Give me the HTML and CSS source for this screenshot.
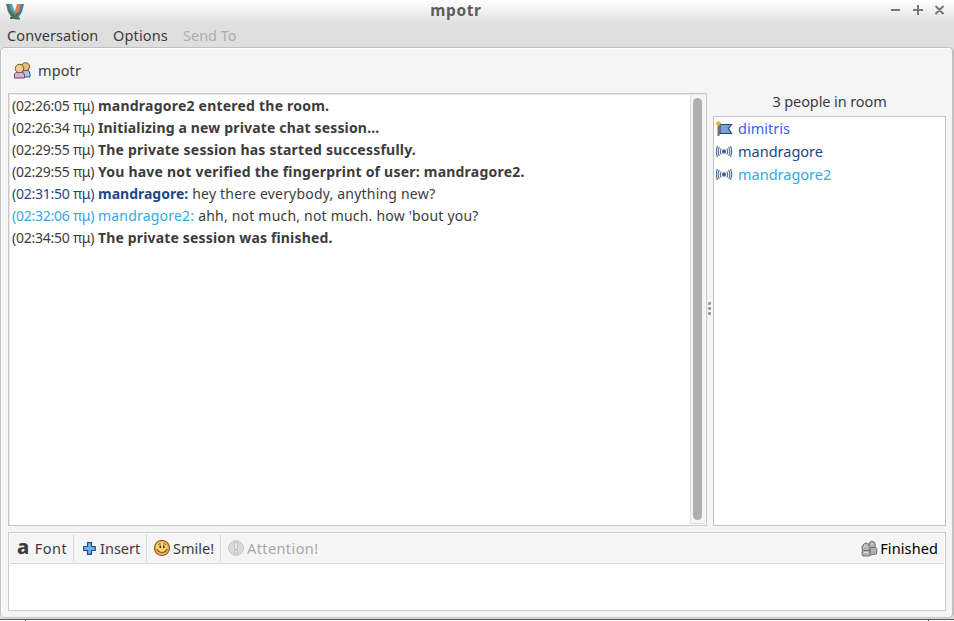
FILE: index.html
```
<!DOCTYPE html>
<html lang="en">
<head>
<meta charset="utf-8">
<title>mpotr</title>
<link rel="stylesheet" href="styles.css">
</head>
<body>
<div class="window">
  <header class="titlebar">
    <svg class="logo" width="20" height="18" viewBox="0 0 20 18"><path d="M1 1H6L8 7L10 12L9 15H7L3 9Z" fill="#4c8066"/><path d="M4 1H7L10 9V12L6 7Z" fill="#55a3b5"/><path d="M19 1H14L11 7L9 12L11 15H13L17 9Z" fill="#487f98"/><path d="M16 1H12L10 8L11 12L14 8Z" fill="#df8053"/><path d="M5 15H9L13 10M6 11L11 15.500H15" fill="none" stroke="#526b4c" stroke-width="1.8"/></svg>
    <h1 class="title">mpotr</h1>
    <svg class="controls" width="56" height="12" viewBox="0 0 56 12" fill="none" stroke="#777" stroke-width="2"><path d="M1 6h9M23 6h10M28 1v10M45.500 2l8 8M53.500 2l-8 8"/></svg>
  </header>
  <nav class="menu"><span class="m1">Conversation</span><span class="m2">Options</span><span class="m3">Send To</span></nav>
  <main class="frame">
    <div class="tab">
      <svg width="17" height="17" viewBox="0 0 17 17"><path d="M8 15V11Q9 8 12 8Q16 8 16 12V15Z" fill="#a9c6ef" stroke="#34579a"/><circle cx="11.5" cy="4.8" r="4" fill="#e5bd7c" stroke="#795325"/><path d="M.5 16V12Q1.500 10 4 10H7Q10 10 10.500 13V16Z" fill="#d9b0d6" stroke="#714477"/><circle cx="5.5" cy="6.5" r="4.2" fill="#f0cc91" stroke="#795325"/></svg>
      <span>mpotr</span>
    </div>
    <div class="panes">
      <section class="chat">
        <div class="log">
          <p><time>(02:26:05 πμ)</time><b class="wide">mandragore2 entered the room.</b></p>
          <p><time>(02:26:34 πμ)</time><b class="mid">Initializing a new private chat session...</b></p>
          <p><time>(02:29:55 πμ)</time><b class="wide">The private session has started successfully.</b></p>
          <p><time>(02:29:55 πμ)</time><b class="wide">You have not verified the fingerprint of user: mandragore2.</b></p>
          <p><time class="navy">(02:31:50 πμ)</time><b class="nick navy">mandragore:</b><span class="said">hey there everybody, anything new?</span></p>
          <p><time class="sky">(02:32:06 πμ)</time><span class="nick said sky">mandragore2:</span><span class="said">ahh, not much, not much. how 'bout you?</span></p>
          <p><time>(02:34:50 πμ)</time><b class="mid">The private session was finished.</b></p>
        </div>
        <div class="scroll"><div class="thumb"></div></div>
      </section>
      <div class="grip"><i></i><i></i><i></i></div>
      <aside class="people">
        <div class="count">3 people in room</div>
        <ul>
          <li><svg width="18" height="16" viewBox="0 0 18 16"><path d="M2.500 3v12" stroke="#65717d" stroke-width="2"/><path d="M4 3.500H15.500L12.500 7.500L15.500 12.500H4Z" fill="#7da3d2" stroke="#29486f" stroke-width="1.200"/><path d="M2.500 0v5M0 2.500h5" stroke="#dcb51f" stroke-width="1.8"/></svg><span class="blue">dimitris</span></li>
          <li><svg width="18" height="16" viewBox="0 0 18 16" fill="none" stroke="#5873a0" stroke-width="1.2"><circle cx="8" cy="7.500" r="1.6" fill="#28466f"/><path d="M5.200 4.500Q3.500 7.500 5.200 10.500M10.800 4.500Q12.500 7.500 10.800 10.500M3.300 3Q1.100 7.500 3.300 12M12.700 3Q14.900 7.500 12.700 12M1.500 2Q-.8 7.500 1.500 13M14.500 2Q16.800 7.500 14.500 13"/></svg><span class="navy">mandragore</span></li>
          <li><svg width="18" height="16" viewBox="0 0 18 16" fill="none" stroke="#5873a0" stroke-width="1.2"><circle cx="8" cy="7.500" r="1.6" fill="#28466f"/><path d="M5.200 4.500Q3.500 7.500 5.200 10.500M10.800 4.500Q12.500 7.500 10.800 10.500M3.300 3Q1.100 7.500 3.300 12M12.700 3Q14.900 7.500 12.700 12M1.500 2Q-.8 7.500 1.500 13M14.500 2Q16.800 7.500 14.500 13"/></svg><span class="sky">mandragore2</span></li>
        </ul>
      </aside>
    </div>
    <section class="compose">
      <div class="tools">
        <div class="tool font"><span class="a">a</span><span>Font</span></div>
        <div class="tool insert"><svg width="13" height="13" viewBox="0 0 13 13"><path d="M4.500.7h4v3.800h3.800v4H8.500v3.800h-4V8.500H.7v-4h3.800Z" fill="#76afe8" stroke="#224f91" stroke-width="1.2"/></svg><span>Insert</span></div>
        <div class="tool smile"><svg width="17" height="17" viewBox="0 0 17 17"><circle cx="8" cy="8" r="7.500" fill="#f0b44c" stroke="#99601c" stroke-width="1.2"/><circle cx="7.500" cy="7.500" r="5.500" fill="#fad27c"/><path d="M4 5Q5 3 6.800 4M9.200 4Q11 3 12 5" fill="none" stroke="#885118"/><path d="M5.500 5.500H7V8H5.500zM9 5.500h1.500V8H9z" fill="#3b2a18"/><path d="M3 9Q4.500 12.500 8 12.500T13 9" fill="none" stroke="#8a5518" stroke-width="1.200"/></svg><span>Smile!</span></div>
        <div class="tool attention"><svg width="17" height="17" viewBox="0 0 17 17"><circle cx="8" cy="8" r="7.500" fill="#dadada" stroke="#c9c9c9"/><path d="M6.500 2.500h3v6.500h-3zM6.500 10.500h3v2.800h-3z" fill="#eee" stroke="#b7b7b7" stroke-width=".8"/></svg><span>Attention!</span></div>
        <div class="tool done"><svg width="17" height="17" viewBox="0 0 17 17" fill="#b2b2b2" stroke="#737373"><path d="M9 15V9Q7 5 8 3Q10 0 13 2Q15 4 14 6Q17 9 15.500 14Z"/><path d="M2 16Q0 14 1.500 10Q0 7 2 5Q5 1 8 5Q10 7 8.500 10Q10 14 8.500 16Z"/><path d="M2 10.500h6M9 7.500h5"/><path d="M3 6h3M10 4h2M3 12.500h4" stroke="#ddd"/></svg><span>Finished</span></div>
      </div>
    </section>
  </main>
  <footer class="edge"><i></i><i></i></footer>
</div>
</body>
</html>
```
FILE: styles.css
```
* { box-sizing: border-box; }
body { margin: 0; background: #dfdfdf; font: 14.5px/22px "Noto Sans", sans-serif; color: #3c3c3c; }
h1, p, ul { margin: 0; padding: 0; }
svg { display: block; flex: none; }
.window { width: 954px; height: 621px; display: flex; flex-direction: column; background: linear-gradient(#fff 0, #f2f2f2 10px, #dfdfdf 24px, #dedede 47px); }
.titlebar { height: 24px; display: flex; justify-content: space-between; padding: 3px 8px 0 5px; }
.title { font-size: 15.5px; line-height: 15px; letter-spacing: .6px; color: #5e5e5e; margin-left: -3px; }
.controls { margin-top: 1px; }
.menu { height: 23px; display: flex; padding-left: 7px; }
.menu span { white-space: nowrap; }
.m1 { width: 106px; letter-spacing: .1px; }
.m2 { width: 70px; letter-spacing: .15px; }
.m3 { color: #b0aca8; }
.frame { height: 571px; border: 1px solid #c3bfbc; border-right-width: 2px; border-radius: 5px; background: #f5f5f5; padding: 0 6px 0 7px; box-shadow: inset 1px 1px #fff; }
.tab { height: 45px; display: flex; align-items: center; padding: 0 0 0 6px; gap: 7px; }
.tab span { margin-top: -1px; letter-spacing: .1px; }
.panes { display: flex; height: 433px; }
.chat { width: 699px; border: 1px solid #c8c8c8; background: #fff; display: flex; justify-content: space-between; box-shadow: inset 1px 1px #e8e8e8; }
.log { padding: 1px 0 0 3px; font-size: 14px; }
.log p { height: 22px; display: flex; white-space: nowrap; }
time { width: 86px; letter-spacing: -.25px; }
.wide { letter-spacing: .22px; }
.mid { letter-spacing: .16px; }
.said { letter-spacing: .2px; }
.nick { margin-right: 4px; }
.navy { color: #204a87; }
.sky { color: #35a7e8; }
.blue { color: #3465f0; }
.scroll { width: 15px; margin: 1px 1px 1px 0; background: #f5f5f5; border-left: 1px solid #ddd; border-bottom: 1px solid #ddd; padding: 3px 2px 2px; }
.thumb { width: 9px; height: 422px; border-radius: 5px; background: #b0b0b0; }
.grip { width: 6px; display: flex; flex-direction: column; align-items: center; justify-content: center; gap: 2px; padding: 0 2px 3px 0; }
.grip i { width: 3px; height: 3px; background: #999; border-radius: 1px; }
.people { width: 233px; }
.count { height: 23px; text-align: center; line-height: 16px; letter-spacing: -.1px; }
.people ul { height: 410px; list-style: none; border: 1px solid #c3c3c3; background: #fff; padding: 0 0 0 2px; }
.people li { height: 23px; display: flex; align-items: center; gap: 4px; }
.people span { margin-top: -1px; }
.compose { height: 79px; margin-top: 6px; border: 1px solid #ccc; background: #fff; padding: 1px; }
.tools { height: 30px; display: flex; background: #f5f5f5; border-bottom: 1px solid #d8d8d8; }
.tool { display: flex; align-items: center; height: 28px; border-right: 1px solid #d8d8d8; white-space: nowrap; }
.font { width: 64px; padding-left: 7px; gap: 5px; letter-spacing: .5px; }
.insert { width: 73px; padding-left: 9px; gap: 4px; }
.smile { width: 74px; padding-left: 7px; gap: 2px; }
.attention { border: 0; padding-left: 7px; gap: 2px; color: #a8a8a8; letter-spacing: .4px; }
.done { border: 0; margin-left: auto; padding-right: 6px; gap: 2px; color: #000; letter-spacing: .1px; }
.a { font-weight: 800; font-size: 20px; line-height: 20px; margin-top: -3px; }
.edge { height: 2px; margin-top: 1px; border-top: 1px solid #555; background: #fff; display: flex; justify-content: space-between; padding: 0 25px; }
.edge i { width: 1px; height: 1px; background: #333; }
```
